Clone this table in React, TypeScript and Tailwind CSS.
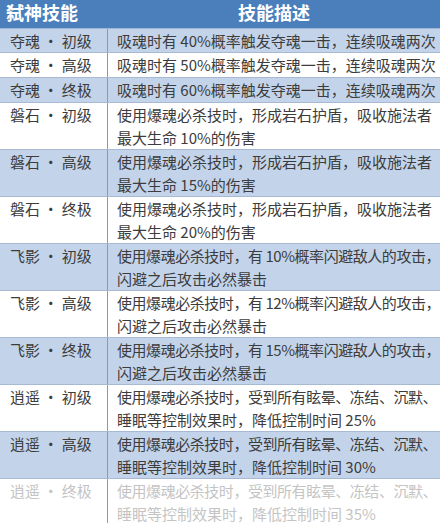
import React from "react";

type Row = { name: string; lines: string[] };

const rows: Row[] = [
  { name: "夺魂 • 初级", lines: ["吸魂时有 40%概率触发夺魂一击，连续吸魂两次"] },
  { name: "夺魂 • 高级", lines: ["吸魂时有 50%概率触发夺魂一击，连续吸魂两次"] },
  { name: "夺魂 • 终极", lines: ["吸魂时有 60%概率触发夺魂一击，连续吸魂两次"] },
  { name: "磐石 • 初级", lines: ["使用爆魂必杀技时，形成岩石护盾，吸收施法者", "最大生命 10%的伤害"] },
  { name: "磐石 • 高级", lines: ["使用爆魂必杀技时，形成岩石护盾，吸收施法者", "最大生命 15%的伤害"] },
  { name: "磐石 • 终极", lines: ["使用爆魂必杀技时，形成岩石护盾，吸收施法者", "最大生命 20%的伤害"] },
  { name: "飞影 • 初级", lines: ["使用爆魂必杀技时，有 10%概率闪避敌人的攻击，", "闪避之后攻击必然暴击"] },
  { name: "飞影 • 高级", lines: ["使用爆魂必杀技时，有 12%概率闪避敌人的攻击，", "闪避之后攻击必然暴击"] },
  { name: "飞影 • 终极", lines: ["使用爆魂必杀技时，有 15%概率闪避敌人的攻击，", "闪避之后攻击必然暴击"] },
  { name: "逍遥 • 初级", lines: ["使用爆魂必杀技时，受到所有眩晕、冻结、沉默、", "睡眠等控制效果时，降低控制时间 25%"] },
  { name: "逍遥 • 高级", lines: ["使用爆魂必杀技时，受到所有眩晕、冻结、沉默、", "睡眠等控制效果时，降低控制时间 30%"] },
  { name: "逍遥 • 终极", lines: ["使用爆魂必杀技时，受到所有眩晕、冻结、沉默、", "睡眠等控制效果时，降低控制时间 35%"] },
];

const font = { fontFamily: '"Noto Sans CJK SC", "Noto Sans", sans-serif' };

export default function App() {
  return (
    <div className="w-[440px] h-[523px] overflow-hidden bg-white" style={font}>
      <div className="grid grid-cols-[108px_1fr] h-[29px] bg-[#4b7fbc] border-b border-[#9fb6d6] text-white text-[18px] font-semibold leading-[24px]">
        <div className="pl-[6px]">弑神技能</div>
        <div className="text-center">技能描述</div>
      </div>
      {rows.map((r, i) => {
        const blue = i % 2 === 0;
        const faded = i === rows.length - 1;
        const single = r.lines.length === 1;
        return (
          <div
            key={r.name}
            className={`grid grid-cols-[108px_1fr] border-b border-[#a7b9d3] text-[15px] leading-[23px] ${
              single ? (i === 0 ? "h-[24px]" : "h-[25px]") : "h-[47px]"
            } ${blue ? "bg-[#c3d4ea]" : "bg-white"} ${faded ? "text-[#c4c4c4]" : "text-[#3c3c3c]"}`}
          >
            <div className="pl-[10px] whitespace-nowrap border-r border-[#7f9bc0]">{r.name}</div>
            <div className="pl-[9px] whitespace-nowrap">
              {r.lines.map((l, j) => (
                <div
                  key={l}
                  className={j === 0 && (l.endsWith("，") || l.endsWith("、")) ? "tracking-[-0.45px]" : ""}
                >
                  {l}
                </div>
              ))}
            </div>
          </div>
        );
      })}
    </div>
  );
}
